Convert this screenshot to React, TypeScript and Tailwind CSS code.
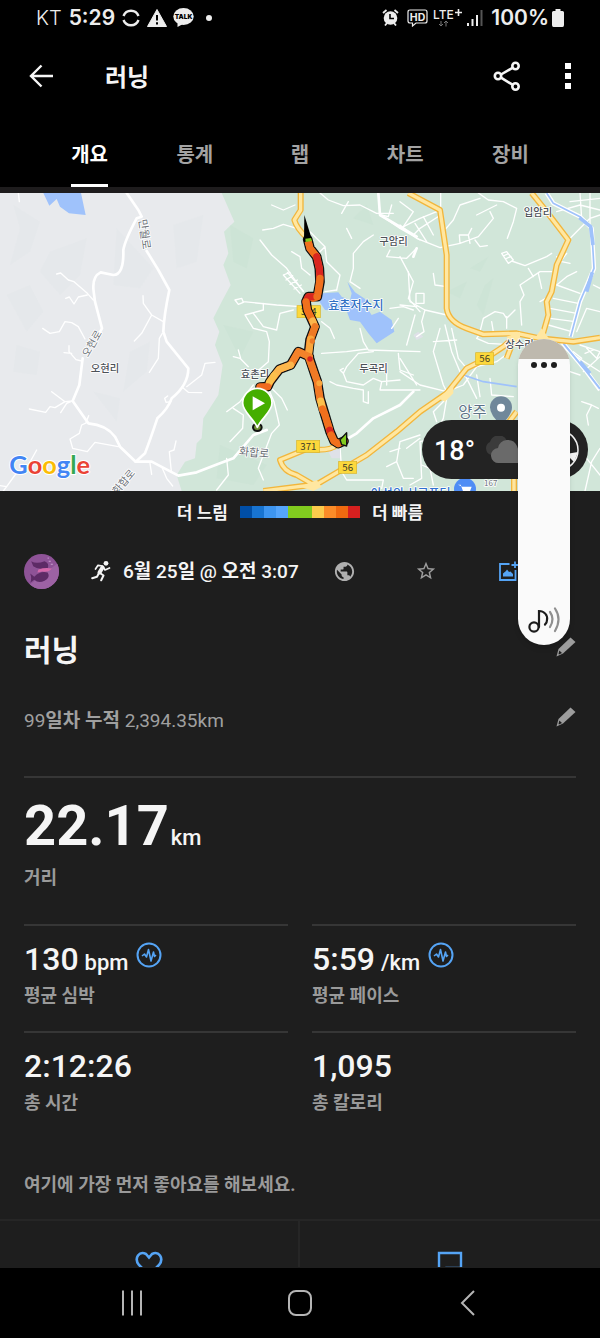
import React from 'react';
import { MdPublic, MdStarBorder } from 'react-icons/md';

const tabs = ['개요', '통계', '랩', '차트', '장비'];

const paceColors = [
  'bg-[#004ea6]',
  'bg-[#1874d1]',
  'bg-[#3d95f0]',
  'bg-[#55a5fb]',
  'bg-[#81cb1f]',
  'bg-[#81cb1f]',
  'bg-[#fccb4c]',
  'bg-[#fb8c28]',
  'bg-[#ef6a10]',
  'bg-[#d6201f]',
];

const stats = [
  { value: '130', unit: 'bpm', label: '평균 심박', chart: true },
  { value: '5:59', unit: '/km', label: '평균 페이스', chart: true },
  { value: '2:12:26', unit: '', label: '총 시간', chart: false },
  { value: '1,095', unit: '', label: '총 칼로리', chart: false },
];

// Minor roads, one list per map section
const westRoads = [
  'M280 345 L262 325 L222 290 L205 285 L182 264 L170 267',
  'M262 330 L235 336 L222 357 L208 336 L197 340',
  'M255 462 L235 425 L215 413 L195 410 L178 440 L150 445 L128 430',
  'M245 528 L228 524 L207 500 L207 482 M215 505 L192 503',
  'M218 648 L195 650 L155 620 M218 648 L200 655 L182 683 M195 650 L165 668 L150 665 L137 682 L88 672',
  'M262 712 L245 720 L238 745 L210 762 L218 790 L262 800 L285 772 L355 785 M258 712 L266 692',
  'M490 410 L455 390 L430 355 L429 332 M455 390 L425 445 L403 468',
  'M487 445 L478 460 L475 520 L448 562',
  'M560 605 L605 570 L615 535 L645 532 M545 605 L565 622 L605 623 M513 650 L498 652 L494 640 L503 633',
  'M110 795 L85 840 L45 870 L20 905 L0 902 M20 905 L10 918',
  'M528 768 L522 795 L508 800 L514 860 M487 850 L500 880 L518 903 M450 835 L455 868',
  'M55 24 L58 50',
];

const centerRoads = [
  'M215 60 L250 75 L285 60 M188 135 L220 130 L250 118 L290 130 M180 165 L215 210 L260 250 L310 320',
  'M330 140 L375 185 L380 230 L420 270 L410 315 M375 185 L350 210 M275 200 L300 215 L305 250 L330 270',
  'M250 270 L300 325 M262 262 L310 318 M250 270 L270 262 M258 285 L278 272 M270 298 L292 285 M282 312 L304 300',
  'M105 345 L125 340 L130 352 L115 358 L105 345 M130 350 L230 360 L300 365',
  'M190 355 L190 375 L135 390 L160 430 L200 440 L208 470 L205 530 L170 560 M160 385 L190 425 L230 435 L240 385 L280 375',
  'M365 410 L390 430 L403 460 M410 315 L375 320',
  'M100 515 L120 520 L145 545 M115 495 L122 520 M210 605 L245 640 L262 675 M160 600 L120 650 L80 680 M100 670 L130 690 L128 730 L90 770',
  'M205 610 L222 650 L238 720 L215 745 L175 850 M80 820 L85 870 L50 915 M175 850 L190 885',
  'M360 24 L385 45 L430 62 L480 60 L530 85 L580 85 M535 24 L540 90 L600 130 L660 165 M445 50 L425 85 M575 60 L565 95 L545 90 M600 50 L640 80 L610 125',
  'M520 150 L490 170 L460 205 L460 250 L450 290 L480 310 M570 195 L560 215 L620 220 L650 190 M600 215 L640 290 L625 340 L660 380',
  'M570 370 L610 365 L640 375 M480 430 L490 470 L505 495 L660 500 M365 505 L440 500 L500 492',
  'M430 550 L420 555 L430 565 L440 545 L475 505 L520 500 M430 565 L440 590 L490 600 L520 580 L545 590 L540 615 L660 615',
  'M390 590 L410 600 L460 610 L490 615 L490 650 L505 655 L505 620 M560 555 L560 600 M595 505 L600 555 L640 570 M545 590 L600 585',
  'M420 785 L425 860 L440 885 L550 885 L545 910 M660 750 L600 770 L590 830 L610 880 L640 880 M600 790 L570 800 M590 830 L560 845',
  'M440 130 L455 160 M645 390 L620 480 M595 400 L575 430',
];

const eastRoads = [
  'M122 24 L122 80 M122 90 L60 130 L40 150 M0 130 L60 100 L110 80 M70 95 L100 150 M45 115 L80 170',
  'M0 120 L50 160 L120 188 L180 175 L235 155 L280 100 L270 80 M180 175 L178 150 L205 150 L210 175 M205 150 L215 130 M225 165 L240 185 L262 182 M230 90 L290 60',
  'M235 24 L265 45 L310 50 L350 70 L340 110 L322 160 M130 140 L160 105 L180 60 L240 40',
  'M305 205 L320 200 L340 225 L325 235 Z M310 213 L325 206 M316 222 L333 214 M335 228 L375 242 L440 215 L455 205',
  'M470 245 L500 205 M470 215 L485 230 L510 235 M455 260 L420 260 L360 300 L372 330 L360 350 L365 420 M400 275 L385 250 M415 265 L425 310',
  'M455 330 L420 350 M530 260 L500 275 L470 300 M470 300 L540 325 M460 340 L535 355 M450 370 L530 385 M450 400 L525 410 M445 420 L515 440',
  'M500 170 L570 100 L600 90 M470 80 L540 60 L600 75 M540 24 L545 100 M570 24 L570 120 M510 50 L600 40',
  'M25 260 L30 350 L75 375 L140 390 M48 325 L72 325 L72 355 L48 355 Z M75 375 L65 410 L72 440 L50 455 M0 360 L50 365 M100 265 L105 300 L140 305',
  'M240 440 L250 400 L285 380 L310 385 L320 400 L345 375 M320 430 L320 395 M280 440 L275 410 M240 445 L230 460 L265 475 L345 480',
  'M135 420 L155 500 L180 560 L195 575 M155 430 L175 520 L200 550 M120 430 L100 500 L130 600 L140 620 M100 470 L170 465',
  'M0 560 L60 600 L140 620 L190 600 L230 545 L290 530 L330 500 M0 520 L50 600 M190 560 L230 640 M230 570 L240 635 M270 580 L275 630 L340 635 M140 640 L130 700 L100 760 L60 770 L65 880 L30 900',
  'M140 640 L100 680 L110 710 M60 760 L20 790 M65 840 L90 850 L100 900',
  'M540 480 L600 500 M550 560 L600 515 M560 490 L590 520 L600 500 M555 505 L580 495 M520 500 L545 520 M490 490 L600 560 M530 440 L560 370 L600 380 M580 300 L600 310',
  'M510 560 L540 570 M545 650 L575 660 L560 690 L565 720 M575 660 L595 670 M560 820 L600 870 M555 918 L575 830 L600 790',
];

const routeLine =
  'M323 163 L330 190 L350 215 L358 250 L360 290 L352 335 L325 335 L318 350 L322 375 L345 425 L330 465 L325 510 L345 570 L352 590 L360 640 L375 690 L390 740 L402 768 L415 776 L432 768 M328 515 L295 500 L272 540 L238 553 L210 590 L203 605 L180 606';

const routeParts = [
  { d: 'M323 163 L330 190 L350 215', color: '#f0701d' },
  { d: 'M350 215 L358 250 L360 280', color: '#d9261f' },
  { d: 'M360 280 L352 335 L340 340', color: '#f0701d' },
  { d: 'M340 335 L325 335 L318 350', color: '#d9261f' },
  { d: 'M318 350 L322 375 L338 408', color: '#f0701d' },
  { d: 'M338 408 L345 425', color: '#fcb64c' },
  { d: 'M345 425 L332 462', color: '#ee7a25' },
  { d: 'M332 462 L325 515', color: '#fba63b' },
  { d: 'M325 515 L345 570 L352 590 L360 645', color: '#f17a25' },
  { d: 'M362 648 L367 672', color: '#fcc04c' },
  { d: 'M367 672 L375 690 L388 730', color: '#f0701d' },
  { d: 'M389 735 L392 745', color: '#d9261f' },
  { d: 'M393 750 L402 768 L415 776', color: '#f0701d' },
  { d: 'M328 515 L295 500 L272 540', color: '#f3822a' },
  { d: 'M272 540 L238 553 L222 572', color: '#fcb64c' },
  { d: 'M222 572 L208 592', color: '#fcc04c' },
  { d: 'M203 605 L180 606', color: '#ef6a20' },
];

function RouteMap() {
  return (
    <svg
      viewBox="0 24 1800 894"
      preserveAspectRatio="xMidYMid slice"
      className="block h-[298px] w-full font-['Noto_Sans_CJK_KR',sans-serif]"
      role="img"
      aria-label="러닝 경로 지도"
    >
      <rect y="24" width="1800" height="894" fill="#e8eaed" />
      <g fill="#e2e5e8" opacity="0.4">
        <path d="M40 60 L120 110 L90 200 L30 240 L60 130Z M150 200 L260 160 L240 270 L180 330 L120 260Z M20 330 L90 300 L130 380 L80 440Z M350 130 L460 250 L420 310 L340 300Z M520 120 L610 90 L590 230 L530 250Z M50 480 L120 500 L110 570 L40 560Z M390 500 L450 470 L440 560 L370 620Z M280 620 L360 640 L350 710Z" />
      </g>
      <path
        d="M665 24 L703 110 L672 140 L685 205 L670 240 L692 300 L665 350 L640 400 L658 440 L645 480 L668 540 L655 630 L610 700 L605 760 L590 775 L585 820 L555 830 L530 870 L545 918 L1800 918 L1800 24 Z"
        fill="#d1e6d9"
      />
      <g fill="#c8e0d1" opacity="0.4">
        <path d="M690 120 L760 160 L740 250 L700 230Z M670 420 L760 440 L720 520Z M1410 250 L1465 215 L1440 260Z M1340 320 L1400 290 L1380 340Z M1455 300 L1480 280 L1450 390 L1430 360Z M1060 100 L1100 60 L1120 120Z M660 780 L800 840 L760 900 L650 880Z" />
      </g>
      <path d="M130 24 L148 62 L170 42 L180 65 L207 85 L257 90 L243 24 Z" fill="#9fc2fb" />

      {/* West */}
      <g fill="none" stroke="#fff" strokeLinecap="round" strokeLinejoin="round">
        <g strokeWidth="4">
          {westRoads.map((d) => (
            <path key={d} d={d} />
          ))}
        </g>
        <g strokeWidth="8">
          <path d="M380 24 L415 75 L425 95 L410 100 Q375 165 370 195 Q372 270 340 270 L302 262 Q275 275 281 320 L285 350 L306 430 L298 445" />
          <path d="M440 198 L475 255 L508 315 Q492 390 490 440 L500 470 L565 550 Q565 600 515 640 Q505 670 472 700 Q452 760 435 805 L407 830" />
          <path d="M248 520 L238 600 L218 648 L265 715 Q320 720 345 755 L360 785 L407 830 L455 830 L535 872 L590 862 L660 835 L700 820 L760 750 L800 735" />
        </g>
      </g>

      {/* Center */}
      <g transform="translate(600 0)">
        <path
          d="M368 325 L415 322 L425 335 L450 345 L455 325 L442 290 L465 322 L500 345 L505 375 L515 390 L540 380 L575 405 L583 440 L530 475 L505 445 L480 410 L450 405 L440 378 L375 375 L355 345 Z"
          fill="#9fc2fb"
        />
        <g fill="none" stroke="#fff" strokeWidth="4" strokeLinecap="round" strokeLinejoin="round">
          {centerRoads.map((d) => (
            <path key={d} d={d} />
          ))}
          <path d="M410 780 L470 745 L520 700 L600 660 L640 620 M535 24 L540 90 L650 155 M650 190 L640 215" strokeWidth="8" />
        </g>
        <path d="M385 800 L420 790 L420 820 L395 820Z M640 450 L655 440 L670 455 L650 465Z" fill="#dfe1e8" />
      </g>

      {/* East */}
      <g transform="translate(1200 0)">
        <g fill="none" stroke="#fff" strokeWidth="4" strokeLinecap="round" strokeLinejoin="round">
          {eastRoads.map((d) => (
            <path key={d} d={d} />
          ))}
        </g>
        <g fill="none" stroke="#fff" strokeWidth="13" strokeLinejoin="round">
          <path d="M440 24 L460 55 L540 95 L575 130 L582 250 L540 350 L512 455 M485 470 L560 560 L600 615" />
        </g>
        <g fill="none" stroke="#9fc2fb" strokeLinejoin="round">
          <path d="M440 24 L460 55 L540 95 L575 130 L582 250 L540 350 L512 455" strokeWidth="5" />
          <path d="M538 98 L572 125 L579 180 M577 262 L560 320 M540 530 L570 565" strokeWidth="11" />
          <path d="M490 475 L560 560 L600 612" strokeWidth="6" />
          <path d="M190 570 L250 590 L350 605" strokeWidth="5" />
        </g>
      </g>

      {/* Highways */}
      {[
        { color: '#f2b63c', width: 18 },
        { color: '#ffe7a1', width: 10 },
      ].map((layer) => (
        <g key={layer.color} fill="none" stroke={layer.color} strokeWidth={layer.width} strokeLinejoin="round">
          <path d="M902 24 L902 75 L883 105 Q890 130 922 160" />
          <path d="M790 918 L950 898 L1100 810 L1190 740 L1260 680 L1340 625 L1400 550 L1450 525 L1510 485 L1550 450" />
          <path d="M1010 780 Q990 800 920 792 L840 825 Q850 860 890 870 L950 905" />
          <path d="M1225 24 L1320 75 L1340 210 L1340 370 Q1345 410 1400 430 L1450 448 L1550 445 L1620 460 L1720 470 L1800 458" />
          <path d="M1595 24 L1640 80 L1705 165 L1670 240 L1655 320 L1640 350 L1645 390 L1625 460" />
          <path d="M1520 520 L1545 455 M1550 680 L1520 720 M1542 880 L1542 918" />
        </g>
      ))}
      <path d="M1315 640 L1360 600 L1360 625 L1335 650Z M1520 455 L1560 440 L1560 470 L1530 490Z M900 905 L950 885 L965 905 L940 918Z M1605 460 L1625 430 L1650 465Z" fill="#ffe7a1" />

      {/* Road shields */}
      <g fontSize="29" textAnchor="middle" fill="#3c3c28">
        <rect x="891" y="362" width="70" height="36" fill="#fcd83c" stroke="#d9b52b" strokeWidth="2" />
        <text x="926" y="391">364</text>
        <rect x="890" y="766" width="69" height="36" fill="#fcd83c" stroke="#d9b52b" strokeWidth="2" />
        <text x="925" y="794">371</text>
        <rect x="1016" y="829" width="54" height="36" fill="#fcd83c" stroke="#d9b52b" strokeWidth="2" />
        <text x="1043" y="858">56</text>
        <rect x="1427" y="503" width="54" height="36" fill="#fcd83c" stroke="#d9b52b" strokeWidth="2" />
        <text x="1454" y="532">56</text>
      </g>

      {/* Place names */}
      <g
        fontSize="31"
        fontWeight="500"
        fill="#4c5157"
        stroke="#fff"
        strokeWidth="5"
        paintOrder="stroke"
        strokeLinejoin="round"
      >
        <text x="272" y="560">오현리</text>
        <text x="1138" y="180">구암리</text>
        <text x="1078" y="560">두곡리</text>
        <text x="722" y="579">효촌리</text>
        <text x="1571" y="94">입암리</text>
        <text x="1516" y="489">상수리</text>
        <g fontWeight="400" fill="#6b7177">
          <text x="716" y="810" fontSize="33" transform="rotate(5 716 810)">화합로</text>
          <text transform="translate(416 104) rotate(82)" fontSize="33">만월로</text>
          <text transform="translate(264 518) rotate(-60)">오현로</text>
          <text transform="translate(352 930) rotate(-50)">화합로</text>
          <text x="1452" y="904" fontSize="24">167</text>
        </g>
        <text x="1375" y="697" fontSize="46" fontWeight="400" fill="#5d7387">양주</text>
        <text x="985" y="374" fontSize="36" fill="#2f6fc4">효촌저수지</text>
        <text x="1112" y="938" fontSize="36" fill="#2f6fd0">아성의 서고푸터</text>
      </g>

      <path d="M1503 720 Q1470 690 1470 667 A33 33 0 0 1 1536 667 Q1536 690 1503 720Z" fill="#70879a" />
      <circle cx="1503" cy="668" r="12" fill="#fff" />
      <circle cx="1395" cy="912" r="33" fill="#4f8df5" />
      <path d="M1374 899 h8 l8 22 h19 l6 -16 h-28" fill="#fff" />

      {/* Recorded route */}
      <g transform="translate(600 0)" fill="none" strokeLinejoin="round" strokeLinecap="round">
        <ellipse cx="172" cy="727" rx="13" ry="11" fill="#6d8d35" stroke="#111" strokeWidth="6" />
        <path d={routeLine} stroke="#111" strokeWidth="29" />
        <path d={routeLine} stroke="#f17a25" strokeWidth="21" />
        <g strokeWidth="21">
          {routeParts.map((part) => (
            <path key={part.d} d={part.d} stroke={part.color} />
          ))}
        </g>
        <g stroke="none">
          <path d="M313 90 L336 165 L312 172Z" fill="#000" />
          <path d="M316 161 L333 159 L336 168 L317 171Z" fill="#81cb1f" />
          <circle cx="350" cy="335" r="10" fill="#f0701d" />
          <circle cx="358" cy="595" r="9" fill="#fba63b" />
          <circle cx="330" cy="522" r="8" fill="#d9261f" />
          <circle cx="337" cy="468" r="8" fill="#ee7a25" />
        </g>
        <path d="M440 743 L440 783 L425 779 L420 764Z" fill="#81cb1f" stroke="#111" strokeWidth="4" />
        <path
          d="M172 727 C160 700 128 680 128 654 A44 44 0 0 1 216 654 C216 680 184 700 172 727Z"
          fill="#45ae00"
          stroke="#fff"
          strokeWidth="5"
        />
        <path d="M158 634 L195 655 L158 676Z" fill="#fff" />
      </g>

      <text
        x="28"
        y="867"
        fontSize="76"
        fontWeight="700"
        className="font-[Lato,sans-serif]"
        stroke="#fff"
        strokeWidth="6"
        paintOrder="stroke"
      >
        <tspan fill="#4285f4">G</tspan>
        <tspan fill="#ea4335">o</tspan>
        <tspan fill="#fbbc05">o</tspan>
        <tspan fill="#4285f4">g</tspan>
        <tspan fill="#34a853">l</tspan>
        <tspan fill="#ea4335">e</tspan>
      </text>
    </svg>
  );
}

function StatusBar() {
  return (
    <div className="flex h-[35px] items-center justify-between px-9 font-[Inter,sans-serif] text-[21px] text-[#ededed]">
      <div className="flex items-center">
        <span className="text-xl font-light">KT</span>
        <span className="ml-[7px] font-semibold">5:29</span>
        <svg className="ml-[7px] size-[18px]" viewBox="0 0 18 18" fill="none" stroke="currentColor" strokeWidth="2.4">
          <path d="M1.5 7 A8 8 0 0 1 16.5 7 M1.5 11 A8 8 0 0 0 16.5 11" />
        </svg>
        <svg className="ml-[7px] h-[18px] w-5" viewBox="0 0 20 18">
          <path d="M10 0.5 L19.5 17.5 H0.5 Z" fill="currentColor" stroke="currentColor" strokeLinejoin="round" />
          <path d="M10 6 V11.5 M10 13.2 V15.4" stroke="#000" strokeWidth="2" />
        </svg>
        <svg className="ml-[6px] h-[19px] w-[21px]" viewBox="0 0 21 19">
          <ellipse cx="10.5" cy="8.5" rx="10.2" ry="8.5" fill="currentColor" />
          <path d="M4.5 14 L4.5 19 L10 16 Z" fill="currentColor" />
          <text x="10.5" y="11" fontSize="6.5" fontWeight="900" textAnchor="middle" fill="#000">
            TALK
          </text>
        </svg>
        <span className="ml-3 size-[6px] rounded-full bg-[#ededed]" />
      </div>
      <div className="flex items-center">
        <svg className="size-[17px]" viewBox="0 0 17 17">
          <circle cx="8.5" cy="9" r="6.8" fill="currentColor" />
          <path d="M1 4 L4.5 1 M16 4 L12.5 1 M3 16.5 L5 14 M14 16.5 L12 14" stroke="currentColor" strokeWidth="1.8" />
          <path d="M8 5 V9.5 H12" fill="none" stroke="#000" strokeWidth="1.6" />
        </svg>
        <svg className="ml-2 h-[18px] w-[21px]" viewBox="0 0 21 18" fill="none" stroke="currentColor">
          <path d="M3 1 H18 Q20 1 20 3 V12 Q20 14 18 14 H9 L5.5 17 V14 H3 Q1 14 1 12 V3 Q1 1 3 1Z" strokeWidth="1.2" />
          <text x="10.5" y="11.5" fontSize="10.5" fontWeight="700" textAnchor="middle" fill="currentColor" stroke="none">
            HD
          </text>
        </svg>
        <svg className="ml-[5px] h-5 w-[29px] overflow-visible" viewBox="0 -2 29 20" fill="currentColor">
          <text x="0" y="9" fontSize="12" fontWeight="500">
            LTE
          </text>
          <path d="M22 2.5 H29 M25.5 -1 V6" stroke="currentColor" strokeWidth="1.6" />
          <path d="M8 11 V16 M6 14 L8 16 L10 14 M13 16.5 V11 M11 13 L13 11 L15 13" fill="none" stroke="#777" />
        </svg>
        <svg className="ml-[5px] h-[18px] w-4" viewBox="0 0 16 18" stroke="currentColor" strokeWidth="2">
          <path d="M1 14 V17 M5.5 10 V17 M10 6 V17" />
          <path d="M14.5 1 V17" stroke="#555" />
        </svg>
        <span className="ml-2 font-semibold">100%</span>
        <svg className="ml-[3px] h-[18px] w-3" viewBox="0 0 12 18" fill="currentColor">
          <path d="M3.5 0 H8.5 V2 H10.5 Q12 2 12 3.5 V16 Q12 18 10.5 18 H1.5 Q0 18 0 16 V3.5 Q0 2 1.5 2 H3.5Z" />
        </svg>
      </div>
    </div>
  );
}

function PencilIcon() {
  return (
    <svg className="size-5" viewBox="0 0 20 20" fill="#9d9d9d">
      <path d="M14.5 0.5 L19.5 5 L7 16.5 L0.5 19.5 L2.5 12 Z" />
      <path d="M3.3 13.5 L6 16 L3 17.5 L2.5 17Z" fill="#1e1e1e" />
    </svg>
  );
}

function RunnerIcon() {
  return (
    <svg
      className="h-[22px] w-5"
      viewBox="0 0 20 21"
      fill="none"
      stroke="currentColor"
      strokeWidth="2"
      strokeLinecap="round"
      strokeLinejoin="round"
    >
      <circle cx="15" cy="2.8" r="2.4" fill="currentColor" stroke="none" />
      <path d="M11.5 7 L8.5 12" strokeWidth="4" />
      <path d="M11.5 5.5 L7 4.8 L4.5 8.5 M12.5 7 L14 9.5 L18.5 7.5" strokeWidth="1.7" />
      <path d="M8 12.5 L6 16.2 L1.2 17.8 M9 12.5 L12.5 15 L10.2 19.8" />
    </svg>
  );
}

function WeatherWidget() {
  return (
    <div className="absolute right-3 bottom-3 flex h-[59px] w-[166px] items-center rounded-full bg-[#232323] pl-3">
      <span className="pt-[3px] text-[27px] font-medium text-white">18°</span>
      <svg className="ml-2 h-7 w-10" viewBox="0 0 40 28">
        <path d="M8 19 A7 7 0 0 1 7 6 A9 9 0 0 1 24 5 L28 19Z" fill="#3b3b3b" />
        <path d="M16 27 A7.5 7.5 0 0 1 15 12 A10 10 0 0 1 34 10 L40 27Z" fill="#6a6a6a" />
      </svg>
      <svg className="absolute top-1 right-1 size-12" viewBox="0 0 48 48" fill="none">
        <circle cx="22" cy="26" r="20" stroke="#f2f2f2" strokeWidth="1.5" />
        <path d="M30 30 L42 28 L38 38 Z" fill="#f2f2f2" />
      </svg>
    </div>
  );
}

function VolumePanel() {
  return (
    <div className="absolute top-[146px] right-[30px] flex h-[306px] w-[52px] flex-col items-center overflow-hidden rounded-full bg-[#fafafa] shadow-md">
      <div className="h-[20px] w-full shrink-0 bg-[#beb9ae]" />
      <button type="button" aria-label="더보기" className="flex h-3 items-center gap-1">
        <span className="size-[6px] rounded-full bg-[#1d1d1d]" />
        <span className="size-[6px] rounded-full bg-[#1d1d1d]" />
        <span className="size-[6px] rounded-full bg-[#1d1d1d]" />
      </button>
      <input
        type="range"
        aria-label="미디어 음량"
        defaultValue={94}
        className="w-full flex-1 opacity-0 [writing-mode:vertical-lr]"
      />
      <svg className="mb-[10px] h-7 w-8" viewBox="0 0 32 28" fill="none" strokeWidth="2.2" strokeLinecap="round">
        <path d="M11 20 V4 C16 4 20 8 19 13 Q19 16 17 17.5" stroke="#1d1d1d" />
        <circle cx="6" cy="20" r="4.6" stroke="#1d1d1d" />
        <path d="M22 5 Q27 12 22 20" stroke="#8f8f8f" />
        <path d="M27 1.5 Q34 12 27 24" stroke="#8f8f8f" />
      </svg>
    </div>
  );
}

function ChartBadge() {
  return (
    <svg className="size-[26px]" viewBox="0 0 26 26" fill="none" stroke="#55a4f5">
      <circle cx="13" cy="13" r="11.5" strokeWidth="2" />
      <path
        d="M6 14 L8.5 12 L10.5 15 L12.5 7.5 L15 19 L17.5 10 L18.5 14.5 L20 13"
        strokeWidth="1.6"
        strokeLinejoin="round"
      />
    </svg>
  );
}

export default function App() {
  return (
    <div className="flex min-h-screen flex-col bg-[#1e1e1e] font-['Roboto','Noto_Sans_CJK_KR',sans-serif] text-[#f5f5f5]">
      <header className="border-b-[6px] border-[#1e1c1d] bg-black">
        <StatusBar />
        <div className="flex h-[82px] items-center pr-[29px] pl-[29px]">
          <button type="button" aria-label="뒤로">
            <svg className="h-6 w-6" viewBox="0 0 24 24" fill="none" stroke="currentColor" strokeWidth="2.4">
              <path d="M24 12 H2 M12.5 1.5 L2 12 L12.5 22.5" />
            </svg>
          </button>
          <h1 className="ml-[52px] flex-1 pt-[3px] text-2xl font-bold">러닝</h1>
          <button type="button" aria-label="공유">
            <svg className="h-[30px] w-7" viewBox="0 0 28 30" fill="none" stroke="currentColor" strokeWidth="2.6">
              <circle cx="22.5" cy="5" r="3.2" />
              <circle cx="5" cy="15" r="3.2" />
              <circle cx="22.5" cy="25.5" r="3.2" />
              <path d="M8 13.5 L19.5 6.8 M8 16.7 L19.5 23.7" />
            </svg>
          </button>
          <button type="button" aria-label="메뉴" className="ml-11 flex flex-col gap-1">
            <span className="size-[6px] bg-white" />
            <span className="size-[6px] bg-white" />
            <span className="size-[6px] bg-white" />
          </button>
        </div>
        <nav className="flex h-[70px] px-[37px]">
          {tabs.map((tab, index) => (
            <a
              key={tab}
              href="#"
              className={
                index === 0
                  ? 'flex flex-1 justify-center text-xl font-bold text-white'
                  : 'flex flex-1 justify-center text-xl font-bold text-[#a3a3a3]'
              }
            >
              <span className={index === 0 ? 'border-b-[3px] border-white pt-6' : 'pt-6'}>{tab}</span>
            </a>
          ))}
        </nav>
      </header>

      <main className="relative flex-1">
        <div className="relative">
          <RouteMap />
          <WeatherWidget />
        </div>

        {/* Pace legend */}
        <div className="flex h-[42px] items-center justify-center gap-3 text-[17px] font-bold">
          <span className="pt-[3px]">더 느림</span>
          <div className="flex h-3">
            {paceColors.map((color, index) => (
              <span key={index} className={`w-3 ${color}`} />
            ))}
          </div>
          <span className="pt-[3px]">더 빠름</span>
        </div>

        {/* Activity summary */}
        <section className="px-6">
          <div className="mt-[20px] flex h-9 items-center">
            <svg className="size-[35px] rounded-full" viewBox="0 0 34 34" role="img" aria-label="프로필">
              <rect width="34" height="34" fill="#8e5397" />
              <path d="M0 34 L34 8 V34Z" fill="#9d62a4" />
              <path d="M7 7 Q12 10 20 7 Q25 9 23 14 Q14 16 9 12Z" fill="#5d2b66" />
              <path d="M6 19 L10 22 Q16 16 23 18 Q26 23 20 26 Q14 29 10 25 L6 28 Q8 24 6 19Z" fill="#5d2b66" />
              <path d="M14 15 Q20 13 27 14 Q24 18 18 17 L13 18Z" fill="#d468ab" />
              <path d="M24 7 h2 M26 10 h2 M23 4 h1" stroke="#c9a3d1" />
            </svg>
            <span className="ml-8">
              <RunnerIcon />
            </span>
            <span className="ml-3 pt-[3px] text-[19px] font-medium">
              6<b>월</b> 25<b>일</b> @ <b>오전</b> 3:07
            </span>
            <button type="button" aria-label="공개 범위" className="ml-[34px] text-[#b0b0b0]">
              <MdPublic className="size-[23px]" />
            </button>
            <button type="button" aria-label="즐겨찾기" className="ml-[59px] text-[#9d9d9d]">
              <MdStarBorder className="size-[22px]" />
            </button>
            <button type="button" aria-label="사진 추가" className="ml-[62px]">
              <svg className="size-5" viewBox="0 0 20 20" fill="none" stroke="#55a4f5" strokeWidth="1.8">
                <path d="M10.5 3 H1 V19 H16.5 V9 M16 0.5 V7 M12.5 4 H19" />
                <path d="M4 15.5 V12.5 L7 10 L8 8.5 L10 11 L11.5 10.5 L14 13 V15.5Z" fill="#55a4f5" stroke="none" />
              </svg>
            </button>
          </div>

          <div className="mt-9 flex h-[44px] items-center justify-between">
            <h2 className="pt-2 text-3xl font-bold">러닝</h2>
            <button type="button" aria-label="제목 수정">
              <PencilIcon />
            </button>
          </div>

          <div className="mt-7 flex h-[40px] items-center justify-between">
            <p className="pt-2 text-[19px] text-[#a0a0a0]">
              99<b>일차 누적</b> 2,394.35km
            </p>
            <button type="button" aria-label="설명 수정">
              <PencilIcon />
            </button>
          </div>

          <div className="mt-[39px] border-t-2 border-[#363636] pt-5">
            <p className="flex items-baseline gap-[2px] leading-[56px]">
              <span className="text-[56px] font-bold">22.17</span>
              <span className="text-[22px] font-medium">km</span>
            </p>
            <p className="text-lg leading-6 font-bold text-[#9a9a9a]">거리</p>
          </div>

          <div className="mt-[34px] grid grid-cols-2 gap-x-6">
            {stats.map((stat) => (
              <div key={stat.label} className="h-[107px] border-t-2 border-[#363636] pt-[13px]">
                <div className="flex h-10 items-baseline">
                  <span className="text-[32px] leading-10 font-medium">{stat.value}</span>
                  {stat.unit && <span className="ml-[6px] text-[22px] font-medium">{stat.unit}</span>}
                  {stat.chart && (
                    <button type="button" aria-label={`${stat.label} 차트`} className="mt-[3px] ml-2 self-start">
                      <ChartBadge />
                    </button>
                  )}
                </div>
                <p className="mt-[3px] text-lg leading-7 font-bold text-[#9a9a9a]">{stat.label}</p>
              </div>
            ))}
          </div>

          <p className="mt-[33px] text-lg leading-7 font-bold text-[#9a9a9a]">여기에 가장 먼저 좋아요를 해보세요.</p>
        </section>

        <div className="mt-5 grid h-12 grid-cols-2 overflow-hidden border-t-2 border-[#262626]">
          <button type="button" aria-label="좋아요" className="flex justify-center border-r-2 border-[#262626] pt-[30px]">
            <svg className="h-[26px] w-7 shrink-0" viewBox="0 0 28 26" fill="none" stroke="#55a4f5" strokeWidth="2.6">
              <path d="M14 24 L4 14 Q0 9 3 4.5 Q6 0.5 11 3 L14 6.5 L17 3 Q22 0.5 25 4.5 Q28 9 24 14 Z" />
            </svg>
          </button>
          <button type="button" aria-label="댓글" className="flex justify-center pt-[30px]">
            <svg className="size-[26px] shrink-0" viewBox="0 0 26 26" fill="none" stroke="#55a4f5" strokeWidth="2.4">
              <path d="M2 2 H24 V17 H9 L2 25 Z" />
            </svg>
          </button>
        </div>

        <VolumePanel />
      </main>

      {/* System navigation */}
      <nav className="flex h-[70px] items-center bg-black px-12 text-[#b5b5b5]">
        <button type="button" aria-label="최근 앱" className="flex flex-1 justify-center">
          <svg className="h-[26px] w-6" viewBox="0 0 24 26" stroke="currentColor" strokeWidth="2">
            <path d="M3 0.5 V25.5 M12 0.5 V25.5 M21 0.5 V25.5" />
          </svg>
        </button>
        <button type="button" aria-label="홈" className="flex flex-1 justify-center">
          <svg className="size-[26px]" viewBox="0 0 26 26" fill="none" stroke="currentColor" strokeWidth="2">
            <rect x="2" y="1" width="22" height="24" rx="7" />
          </svg>
        </button>
        <button type="button" aria-label="이전" className="flex flex-1 justify-center">
          <svg className="h-[26px] w-4" viewBox="0 0 16 26" fill="none" stroke="currentColor" strokeWidth="2">
            <path d="M14 1 L2 13 L14 25" />
          </svg>
        </button>
      </nav>
    </div>
  );
}
